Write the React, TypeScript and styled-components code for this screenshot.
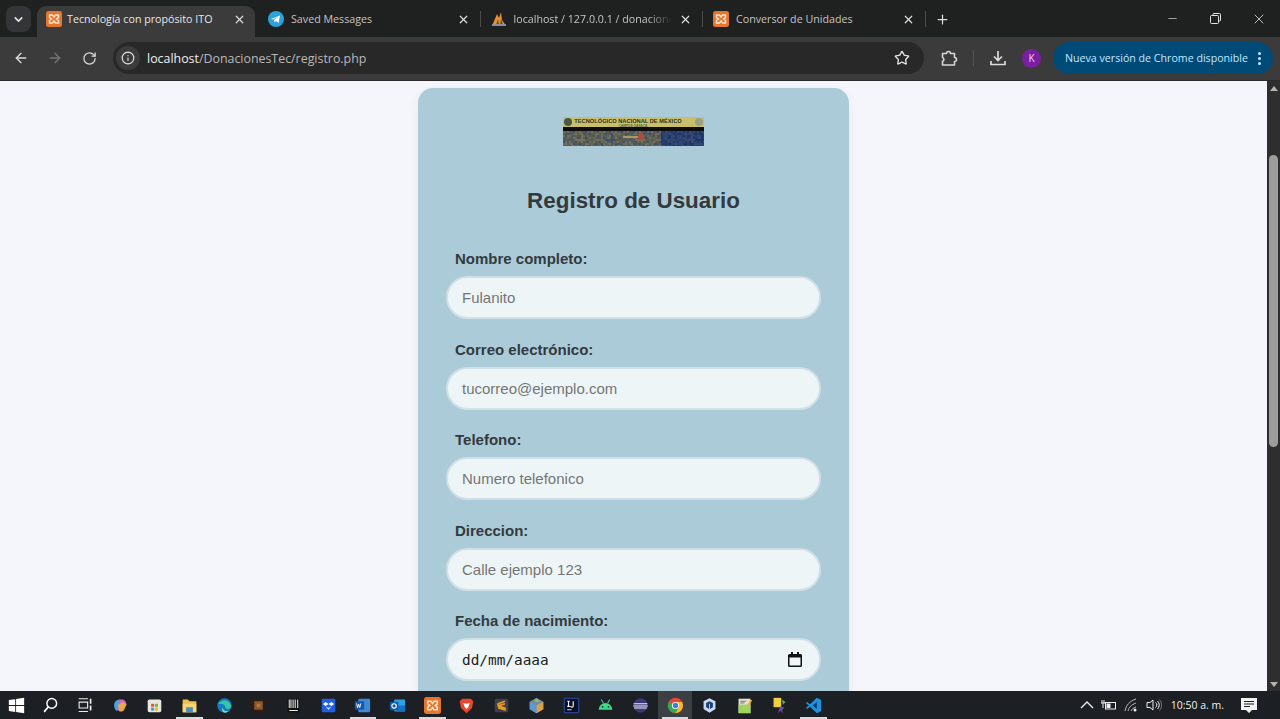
import React from 'react';
import styled, { createGlobalStyle } from 'styled-components';
import { ArrowLeft, ArrowRight, ChevronDown, Info, Minus, Plus, RotateCw, Star, X } from 'lucide-react';

const GlobalStyle = createGlobalStyle`
  html, body {
    margin: 0;
    padding: 0;
    height: 100%;
    overflow: hidden;
    background: #f4f6fb;
  }
  * { box-sizing: border-box; }
`;

const Xampp = ({ size = 16 }: { size?: number }) => (
  <svg width={size} height={size} viewBox="0 0 16 16">
    <rect width="16" height="16" rx="2.5" fill="#e5762e" />
    <path d="M3.5 4h3l1.500 2 1.500-2h3v2.500L10.500 8l2 1.500V12h-3L8 10l-1.500 2h-3V9.500l2-1.500-2-1.500z" fill="none" stroke="#fbe3cf" strokeWidth="1.5" />
  </svg>
);

const Telegram = () => (
  <svg width="16" height="16" viewBox="0 0 16 16">
    <circle cx="8" cy="8" r="8" fill="#2aa3dd" />
    <path d="M3 8l9-3.600-1.400 7.600-2.700-2-1.400 1.400-.3-2.500 4-3.300-5 3z" fill="#fff" />
  </svg>
);

const PhpMyAdmin = () => (
  <svg width="16" height="16" viewBox="0 0 16 16">
    <path d="M1 15L6 3l2 4 2-6 1 8 4 6z" fill="#e8912d" />
    <path d="M5 14l2-6 1 6zM9 14l1-6 2 6z" fill="#5b4a36" />
    <rect x="1" y="13" width="14" height="2" fill="#8a8f99" />
  </svg>
);

const Puzzle = () => (
  <svg width="18" height="18" viewBox="0 0 18 18" fill="none" stroke="#d6d6d6" strokeWidth="1.6" strokeLinejoin="round">
    <path d="M2.500 4.500h4a2 2 0 0 1 4 0h4v4a2 2 0 0 1 0 4v3.500h-12v-3.700a2 2 0 0 0 0-3.800z" />
  </svg>
);

const Download = () => (
  <svg width="18" height="18" viewBox="0 0 18 18" fill="none" stroke="#dcdcdc" strokeWidth="1.7">
    <path d="M9 2v9M5 7.500L9 11.500l4-4M2 12v3.500h14V12" />
  </svg>
);

const Restore = () => (
  <svg width="11" height="11" viewBox="0 0 11 11" fill="none" stroke="#e2e2e2" strokeWidth="1">
    <rect x="0.5" y="2.5" width="8" height="8" rx="1" />
    <path d="M3 2.500V1.500a1 1 0 0 1 1-1h5.500a1 1 0 0 1 1 1V7a1 1 0 0 1-1 1H8.500" />
  </svg>
);

const Calendar = () => (
  <svg width="14" height="15" viewBox="0 0 14 15">
    <path d="M3 0h2v2h4V0h2v2h1.500A1.500 1.500 0 0 1 14 3.500v10a1.500 1.500 0 0 1-1.500 1.500h-11A1.500 1.500 0 0 1 0 13.500v-10A1.500 1.500 0 0 1 1.500 2H3zM1.500 5.500v8h11v-8z" fill="#111" />
  </svg>
);

// mosaic colours of the banner photo: warm on the left, blue on the right
const warmTones = ['#6d6a58', '#57604f', '#7a7058', '#4d5a66', '#5f5a4c', '#3f4f68'];
const blueTones = ['#24396a', '#2c4474', '#1f3566', '#3a4a72', '#29406e', '#33456a'];
const mosaic = Array.from({ length: 71 * 8 }, (_, i) => {
  const col = i % 71;
  const row = Math.floor(i / 71);
  const tones = col > 48 ? blueTones : warmTones;
  return { col, row, fill: tones[(col * 7 + row * 13 + (col * row) % 5) % tones.length] };
});

const Logo = () => (
  <svg width="141" height="29" viewBox="0 0 141 29">
    <defs>
      <filter id="soft"><feGaussianBlur stdDeviation="0.4" /></filter>
    </defs>
    <rect width="141" height="10" fill="#c9bf6a" />
    <rect y="10" width="141" height="4" fill="#0d0d0f" />
    <g filter="url(#soft)">
      {mosaic.map(t => (
        <rect key={`${t.col}-${t.row}`} x={t.col * 2} y={14 + t.row * 2} width="2" height="2" fill={t.fill} />
      ))}
    </g>
    <rect x="60" y="19" width="16" height="2" fill="#a8986a" />
    <circle cx="78" cy="20" r="3" fill="#b8483a" />
    <circle cx="5" cy="5" r="4" fill="#4a5a40" />
    <circle cx="136" cy="5" r="4" fill="#9aa086" />
    <text x="65" y="5.500" textAnchor="middle" fontFamily="Liberation Sans, sans-serif" fontWeight="700" fontSize="5.700" fill="#2a3524">TECNOLÓGICO NACIONAL DE MÉXICO</text>
    <text x="70" y="9.500" textAnchor="middle" fontFamily="Liberation Sans, sans-serif" fontWeight="700" fontSize="3.200" fill="#5a6240">CAMPUS OAXACA</text>
  </svg>
);

const Tile = ({ children }: { children: React.ReactNode }) => (
  <svg width="20" height="20" viewBox="0 0 20 20">{children}</svg>
);

const taskIcons: { id: string; active?: boolean; current?: boolean; icon: React.ReactNode }[] = [
  { id: 'windows', icon: <Tile><path d="M1 3.500l7.500-1v7H1zM9.500 2.300L19 1v8.500H9.500zM1 10.500h7.500v7l-7.500-1zM9.500 10.500H19V19l-9.500-1.300z" fill="#fff" /></Tile> },
  { id: 'search', icon: <Tile><circle cx="11.500" cy="7.500" r="5.700" fill="none" stroke="#fff" strokeWidth="1.700" /><path d="M7.500 11.500L2.500 17.500" stroke="#fff" strokeWidth="2" /></Tile> },
  { id: 'taskview', icon: <Tile><path d="M2 2h11M2 17h11M2.500 6h10v7h-10z" fill="none" stroke="#ececec" strokeWidth="1.300" /><path d="M15 2h2v6h-2zM15 10h2v6h-2z" fill="#ececec" /></Tile> },
  { id: 'copilot', icon: <Tile><path d="M3 13C1 7 5 2 10 3l3 3-5 9c-2 2-4 1-5-2z" fill="#4f9fe0" /><path d="M10 3c4-1 7 2 7 6l-5 7c-2 2-4 1-5-1z" fill="#d867b5" /><path d="M7 9l6-3 4 3-3 7c-2 2-5 1-6-1z" fill="#f2b13f" opacity=".85" /></Tile> },
  { id: 'store', icon: <Tile><rect x="2" y="3" width="16" height="15" rx="2" fill="#e8e6df" /><path d="M6 8h3.500v3.500H6z" fill="#e2543c" /><path d="M10.500 8H14v3.500h-3.500z" fill="#6eb43f" /><path d="M6 12.500h3.500V16H6z" fill="#3c9ae0" /><path d="M10.500 12.500H14V16h-3.500z" fill="#f2b90f" /></Tile> },
  { id: 'folder', active: true, icon: <Tile><path d="M2 3h6l2 2h8v13H2z" fill="#f0c04a" /><path d="M2 8h16v10H2z" fill="#f7d774" /><path d="M6 12h8v6H6z" fill="#4b8ec4" /></Tile> },
  { id: 'edge', icon: <Tile><circle cx="10" cy="10" r="8.500" fill="#1679c4" /><path d="M2 9c2-6 14-8 16 2 0 2-2 3-4 3-2 0-3-1-3-2 0-4-8-5-9-3z" fill="#38c6a3" /><path d="M8 12c0 4 4 6 8 4-2 2-5 3-7 2-2-1-2-4-1-6z" fill="#7fe0a5" /></Tile> },
  { id: 'minecraft', icon: <Tile><rect x="2" y="2" width="16" height="16" fill="#2b1d12" /><rect x="5" y="5" width="10" height="10" fill="#8a5a2f" /><rect x="8" y="8" width="4" height="4" fill="#b37840" /></Tile> },
  { id: 'barcode', icon: <Tile><rect x="3" y="2" width="14" height="16" fill="#111" /><path d="M5 3v10M7 3v10M9.500 3v10M12 3v10M15 3v10M5 16h10" stroke="#eee" strokeWidth="1.200" /></Tile> },
  { id: 'dropbox', icon: <Tile><rect x="2" y="2" width="16" height="16" rx="1.500" fill="#1f5fe0" /><path d="M6.500 6L10 8.200 6.500 10.500 3.500 8.200zM13.500 6l3 2.200-3 2.300L10 8.200zM6.500 11L10 13l3.500-2 -3.500 4z" fill="#fff" /></Tile> },
  { id: 'word', active: true, icon: <Tile><rect x="5" y="2" width="14" height="16" rx="1.500" fill="#3f8ad6" /><rect x="1" y="5" width="11" height="10" rx="1" fill="#1b57a8" /><path d="M3 7.500l1.200 5 1.300-4 1.300 4 1.200-5" fill="none" stroke="#fff" strokeWidth="1" /></Tile> },
  { id: 'outlook', icon: <Tile><rect x="6" y="3" width="13" height="14" rx="1" fill="#2fa3e0" /><path d="M9 10h10v7H9z" fill="#1a6fc0" /><rect x="1" y="5.500" width="10" height="10" rx="1" fill="#0f5ba8" /><circle cx="6" cy="10.500" r="2.600" fill="none" stroke="#fff" strokeWidth="1.300" /></Tile> },
  { id: 'xampp', active: true, icon: <Xampp size={20} /> },
  { id: 'brave', icon: <Tile><path d="M5 2h10l3 3-1.500 8L10 19l-6.500-6L2 5z" fill="#e8472b" /><path d="M6 7l4 1 4-1-2 5-2 2-2-2z" fill="#fff" /></Tile> },
  { id: 'sublime', icon: <Tile><rect x="2" y="2" width="16" height="16" rx="2" fill="#3e4047" /><path d="M14 5L6 8v2.500l8 2.500V15l-8-2.500M6 10.500L14 8" fill="none" stroke="#f09a26" strokeWidth="2" /></Tile> },
  { id: 'box', icon: <Tile><path d="M10 1l8 4.500v9L10 19l-8-4.500v-9z" fill="#7b8aa0" /><path d="M10 10l8-4.500v9L10 19z" fill="#d9a24a" /><path d="M10 10L2 5.500v9L10 19z" fill="#5e9ad0" /><path d="M7 4l3-2 4 2.500-3 2z" fill="#7fc06a" /></Tile> },
  { id: 'intellij', icon: <Tile><rect x="1.500" y="1.500" width="17" height="17" rx="1" fill="#0a0f24" stroke="#2e5fc0" strokeWidth="1" /><path d="M5 5h3M6.500 5v6M5 11h3M12 5v5.500a1.500 1.500 0 0 1-3 0" fill="none" stroke="#fff" strokeWidth="1.300" /><path d="M5 15h5" stroke="#fff" strokeWidth="1" /></Tile> },
  { id: 'android', icon: <Tile><path d="M2 15a8 8 0 0 1 16 0z" fill="#3ddc84" /><path d="M5 3l2.500 4M15 3l-2.500 4" stroke="#3ddc84" strokeWidth="1.200" /><circle cx="6.500" cy="11.500" r="1" fill="#123" /><circle cx="13.500" cy="11.500" r="1" fill="#123" /></Tile> },
  { id: 'eclipse', icon: <Tile><circle cx="10" cy="10" r="8.500" fill="#3b3a78" /><path d="M2 8h16M1.500 10.500h17M2.500 13h15" stroke="#f0edf7" strokeWidth="1.200" /></Tile> },
  { id: 'chrome', active: true, current: true, icon: <Tile><circle cx="10" cy="10" r="9" fill="#e0483c" /><path d="M10 10L2.200 5.500A9 9 0 0 0 10 19l4-6z" fill="#34a853" /><path d="M10 6h7.800A9 9 0 0 1 10 19l4-7z" fill="#f5bd20" /><circle cx="10" cy="10" r="4.200" fill="#fff" /><circle cx="10" cy="10" r="3.200" fill="#3b7de0" /></Tile> },
  { id: 'vbox', icon: <Tile><path d="M10 1.500l7 3.500v9l-7 4.500L3 14V5z" fill="#c8dcf0" /><path d="M10 5l4 2v5l-4 2.500L6 12V7z" fill="#1c3f78" /><path d="M10 8v6.500" stroke="#c8dcf0" /></Tile> },
  { id: 'notes', icon: <Tile><rect x="3" y="2" width="14" height="17" fill="#e5e3d0" /><path d="M3 9h14v10H3z" fill="#9fd45e" /><path d="M5 5h7M5 7h5" stroke="#666" /><path d="M12 11l5-8 2 1-5 8z" fill="#e8b23c" /></Tile> },
  { id: 'sticky', icon: <Tile><path d="M3 1h9v11H3z" fill="#f0d040" /><path d="M11 11l5 2-3 2 1 4-3-3-3 3z" fill="#6f4fb0" /><path d="M13 3l4 3-3 3z" fill="#5fae6c" /></Tile> },
  { id: 'vscode', active: true, icon: <Tile><path d="M14 1l5 2.500v13L14 19 6 11.500 2.500 14 1 13l3.500-3L1 7l1.500-1L6 8.500z" fill="#1f93e0" /><path d="M14 6v8l-5-4z" fill="#0b3f70" /></Tile> },
];

const fields = [
  { label: 'Nombre completo:', placeholder: 'Fulanito', type: 'text' },
  { label: 'Correo electrónico:', placeholder: 'tucorreo@ejemplo.com', type: 'email' },
  { label: 'Telefono:', placeholder: 'Numero telefonico', type: 'tel' },
  { label: 'Direccion:', placeholder: 'Calle ejemplo 123', type: 'text' },
];

const App = () => {
  return (
    <Screen>
      <GlobalStyle />
      <TabStrip>
        <TabSearch><ChevronDown size={13} strokeWidth={3} /></TabSearch>
        <ActiveTab>
          <Xampp />
          <TabTitle $active>Tecnología con propósito ITO</TabTitle>
          <TabClose><X size={13} strokeWidth={2.2} /></TabClose>
        </ActiveTab>
        <Tab>
          <Telegram />
          <TabTitle>Saved Messages</TabTitle>
          <TabClose><X size={13} strokeWidth={2.2} /></TabClose>
        </Tab>
        <TabSep />
        <Tab>
          <PhpMyAdmin />
          <TabTitle $fade>localhost / 127.0.0.1 / donaciones</TabTitle>
          <TabClose><X size={13} strokeWidth={2.2} /></TabClose>
        </Tab>
        <TabSep />
        <Tab>
          <Xampp />
          <TabTitle>Conversor de Unidades</TabTitle>
          <TabClose><X size={13} strokeWidth={2.2} /></TabClose>
        </Tab>
        <TabSep />
        <NewTab><Plus size={15} strokeWidth={2} /></NewTab>
        <WindowControls>
          <WindowButton><Minus size={13} strokeWidth={1.2} /></WindowButton>
          <WindowButton><Restore /></WindowButton>
          <WindowButton><X size={16} strokeWidth={1.2} /></WindowButton>
        </WindowControls>
      </TabStrip>

      <Toolbar>
        <NavButton><ArrowLeft size={16} strokeWidth={2} /></NavButton>
        <NavButton $off><ArrowRight size={16} strokeWidth={2} /></NavButton>
        <NavButton><RotateCw size={15} strokeWidth={2} /></NavButton>
        <Omnibox>
          <SiteInfo><Info size={14} strokeWidth={2} /></SiteInfo>
          <Url><strong>localhost</strong>/DonacionesTec/registro.php</Url>
          <Star size={16} strokeWidth={2} color="#e3e3e3" />
        </Omnibox>
        <ToolIcon $left={16}><Puzzle /></ToolIcon>
        <ToolSep />
        <ToolIcon $left={15}><Download /></ToolIcon>
        <Avatar>K</Avatar>
        <UpdateChip>
          <span>Nueva versión de Chrome disponible</span>
          <Dots><i /><i /><i /></Dots>
        </UpdateChip>
      </Toolbar>

      <Viewport>
        <Page>
          <Card>
            <LogoRow><Logo /></LogoRow>
            <Title>Registro de Usuario</Title>
            <Form>
              {fields.map(field => (
                <Field key={field.label}>
                  <Label>{field.label}</Label>
                  <Input type={field.type} placeholder={field.placeholder} />
                </Field>
              ))}
              <Field>
                <Label>Fecha de nacimiento:</Label>
                <DateBox>
                  <DateText>dd/mm/aaaa</DateText>
                  <Calendar />
                </DateBox>
              </Field>
            </Form>
          </Card>
        </Page>
        <Scrollbar>
          <ScrollArrow><Triangle /></ScrollArrow>
          <Thumb />
          <ScrollArrow $down><Triangle $down /></ScrollArrow>
        </Scrollbar>
      </Viewport>

      <Taskbar>
        <TaskIcons>
          {taskIcons.map(item => (
            <TaskItem key={item.id} $active={item.active} $current={item.current}>{item.icon}</TaskItem>
          ))}
        </TaskIcons>
        <Tray>
          <TrayIcon $width={22}>
            <svg width="14" height="8" viewBox="0 0 14 8" fill="none" stroke="#eee" strokeWidth="1.400"><path d="M1 7l6-6 6 6" /></svg>
          </TrayIcon>
          <TrayIcon $width={22}>
            <svg width="16" height="13" viewBox="0 0 16 13" fill="none" stroke="#eee" strokeWidth="1"><rect x="4.500" y="3.500" width="10" height="6.500" /><path d="M1 1v3M3 1v3M0 4h4M2 4v5" /><rect x="6" y="5" width="3" height="3.500" fill="#eee" /></svg>
          </TrayIcon>
          <TrayIcon $width={24}>
            <svg width="16" height="14" viewBox="0 0 16 14" fill="none" stroke="#bbb" strokeWidth="1"><path d="M1 13C2 7 6 3 12 1M4 13c1-4 3-6 8-8M7 13c1-2 2-3 5-4" /><circle cx="11" cy="12" r="1.500" fill="#eee" stroke="none" /></svg>
          </TrayIcon>
          <TrayIcon $width={20}>
            <svg width="16" height="14" viewBox="0 0 16 14" fill="none" stroke="#eee" strokeWidth="1"><path d="M1 4.500h3L7 2v10L4 9.500H1z" /><path d="M9.500 4.500a3 3 0 0 1 0 5M11.500 3a5.500 5.500 0 0 1 0 8" /><path d="M13.500 1.500a8 8 0 0 1 0 11" stroke="#777" /></svg>
          </TrayIcon>
          <Clock>10:50 a. m.</Clock>
          <Notify>
            <svg width="16" height="15" viewBox="0 0 16 15"><path d="M0 0h16v12h-5l-3 3-3-3H0z" fill="#f2f2f2" /><path d="M3 3.500h10M3 6h10M3 8.500h6" stroke="#1c1f24" strokeWidth="1" /></svg>
          </Notify>
        </Tray>
      </Taskbar>
    </Screen>
  );
};

const Screen = styled.div`
  display: flex;
  flex-direction: column;
  width: 1280px;
  height: 719px;
  overflow: hidden;
  font-family: 'Liberation Sans', Arial, sans-serif;
`;

const TabStrip = styled.div`
  display: flex;
  align-items: flex-end;
  flex: none;
  height: 37px;
  padding-left: 6px;
  background: #1f2020;
  font-family: 'Open Sans', sans-serif;
`;

const TabSearch = styled.div`
  display: flex;
  align-items: center;
  justify-content: center;
  width: 25px;
  height: 26px;
  margin: 0 6px 5px 0;
  border-radius: 8px;
  background: #343536;
  color: #e3e3e3;
`;

const Tab = styled.div`
  display: flex;
  align-items: center;
  gap: 7px;
  flex: none;
  width: 221.5px;
  height: 31px;
  padding: 0 10px 5px 10px;
  color: #c7c7c7;
`;

const ActiveTab = styled(Tab)`
  gap: 5px;
  width: 218px;
  padding: 0 9px 5px 9px;
  margin-right: 3px;
  border-radius: 9px 9px 0 0;
  background: #3b3b3b;
  color: #e3e3e3;
`;

const TabTitle = styled.span<{ $active?: boolean; $fade?: boolean }>`
  flex: 1;
  overflow: hidden;
  white-space: nowrap;
  font-size: 10.7px;
  color: ${p => (p.$active ? '#e6e6e6' : '#c4c4c4')};
  ${p => p.$fade && 'mask-image: linear-gradient(90deg, #000 85%, transparent);'}
`;

const TabClose = styled.span`
  display: flex;
  color: #dedede;
`;

const TabSep = styled.div`
  flex: none;
  width: 1px;
  height: 16px;
  margin: 0 0 10px 0;
  background: #4b4b4b;
`;

const NewTab = styled.div`
  display: flex;
  align-items: center;
  justify-content: center;
  width: 33px;
  height: 26px;
  margin-bottom: 5px;
  color: #dcdcdc;
`;

const WindowControls = styled.div`
  display: flex;
  margin-left: auto;
  align-self: stretch;
`;

const WindowButton = styled.div`
  display: flex;
  align-items: center;
  justify-content: center;
  width: 43px;
  height: 37px;
  color: #e6e6e6;
`;

const Toolbar = styled.div`
  display: flex;
  align-items: center;
  flex: none;
  height: 44px;
  padding: 0 5px 1px 4px;
  border-bottom: 1px solid #2a2a2a;
  background: #3b3b3b;
`;

const NavButton = styled.div<{ $off?: boolean }>`
  display: flex;
  align-items: center;
  justify-content: center;
  width: 34px;
  height: 30px;
  color: ${p => (p.$off ? '#777' : '#dcdcdc')};
`;

const Omnibox = styled.div`
  display: flex;
  align-items: center;
  width: 811px;
  height: 32px;
  margin-left: 7px;
  padding: 0 14px 0 3px;
  border-radius: 16px;
  background: #282828;
`;

const SiteInfo = styled.div`
  display: flex;
  align-items: center;
  justify-content: center;
  width: 24px;
  height: 24px;
  border-radius: 50%;
  background: #3c3c3c;
  color: #e3e3e3;
`;

const Url = styled.div`
  flex: 1;
  margin: 1px 0 0 7px;
  font-family: 'Open Sans', sans-serif;
  font-size: 12.4px;
  color: #b9b9b9;

  strong {
    font-weight: 400;
    color: #f0f0f0;
  }
`;

const ToolIcon = styled.div<{ $left: number }>`
  display: flex;
  margin-left: ${p => p.$left}px;
`;

const ToolSep = styled.div`
  width: 1px;
  height: 16px;
  margin-left: 15px;
  background: #565656;
`;

const Avatar = styled.div`
  display: flex;
  align-items: center;
  justify-content: center;
  width: 19px;
  height: 19px;
  margin-left: 15px;
  border-radius: 50%;
  background: #7b1fa2;
  font-family: 'Open Sans', sans-serif;
  font-size: 10px;
  color: #e9d6f0;
`;

const UpdateChip = styled.div`
  display: flex;
  align-items: center;
  justify-content: space-between;
  width: 220px;
  height: 32px;
  margin-left: 12px;
  padding: 0 12px;
  border-radius: 16px;
  background: #004a77;
  font-family: 'Open Sans', sans-serif;
  font-size: 10.65px;
  white-space: nowrap;
  color: #c2e7ff;
`;

const Dots = styled.div`
  display: flex;
  flex-direction: column;
  gap: 2px;

  i {
    display: block;
    width: 3px;
    height: 3px;
    border-radius: 50%;
    background: #c2e7ff;
  }
`;

const Viewport = styled.div`
  display: flex;
  flex: 1;
  min-height: 0;
`;

const Page = styled.div`
  display: flex;
  justify-content: center;
  flex: 1;
  overflow: hidden;
  padding-top: 7px;
  background: #f4f6fb;
`;

const Card = styled.div`
  flex: none;
  width: 431px;
  height: 700px;
  padding: 29px 28px 0;
  border-radius: 15px;
  background: #abcbd9;
  box-shadow: 0 4px 12px rgba(0, 0, 0, 0.06);
`;

const LogoRow = styled.div`
  display: flex;
  justify-content: center;
  height: 29px;
`;

const Title = styled.h2`
  margin: 41px 0 35px;
  font-size: 22.4px;
  line-height: 28px;
  font-weight: 700;
  text-align: center;
  color: #333a3d;
`;

const Form = styled.div`
  display: flex;
  flex-direction: column;
  gap: 21.6px;
`;

const Field = styled.div`
  display: flex;
  flex-direction: column;
  gap: 8px;
`;

const Label = styled.label`
  padding-left: 9px;
  font-size: 15px;
  line-height: 18px;
  font-weight: 700;
  color: #333a3d;
`;

const Input = styled.input`
  width: 375px;
  height: 43px;
  padding: 0 14px;
  border: 2px solid #d0e0e6;
  border-radius: 22px;
  outline: none;
  background: #eef5f7;
  font-family: 'Liberation Sans', Arial, sans-serif;
  font-size: 15px;
  color: #2d3436;

  &::placeholder {
    color: #757575;
    opacity: 1;
  }
`;

const DateBox = styled.div`
  display: flex;
  align-items: center;
  justify-content: space-between;
  width: 375px;
  height: 43px;
  padding: 0 17px 0 14px;
  border: 2px solid #d0e0e6;
  border-radius: 22px;
  background: #eef5f7;
`;

const DateText = styled.span`
  font-family: 'DejaVu Sans Mono', monospace;
  font-size: 14.4px;
  color: #1c1c1c;
`;

const Scrollbar = styled.div`
  display: flex;
  flex-direction: column;
  align-items: center;
  flex: none;
  width: 13px;
  background: #2e2e2e;
`;

const ScrollArrow = styled.div<{ $down?: boolean }>`
  display: flex;
  align-items: center;
  justify-content: center;
  flex: none;
  height: 14px;
  margin-top: ${p => (p.$down ? 'auto' : '0')};
`;

const Triangle = styled.span<{ $down?: boolean }>`
  width: 0;
  height: 0;
  border-left: 4.5px solid transparent;
  border-right: 4.5px solid transparent;
  ${p => (p.$down ? 'border-top: 5px solid #b5b5b5;' : 'border-bottom: 5px solid #b5b5b5;')}
`;

const Thumb = styled.div`
  flex: none;
  width: 9px;
  height: 292px;
  margin-top: 60px;
  border-radius: 5px;
  background: #9d9d9d;
`;

const Taskbar = styled.div`
  display: flex;
  align-items: stretch;
  justify-content: space-between;
  flex: none;
  height: 28px;
  background: #1c1f24;
`;

const TaskIcons = styled.div`
  display: flex;
`;

const TaskItem = styled.div<{ $active?: boolean; $current?: boolean }>`
  position: relative;
  display: flex;
  align-items: center;
  justify-content: center;
  width: 34.7px;
  background: ${p => (p.$current ? '#3c3f44' : 'transparent')};

  &:first-child {
    width: 33.35px;
  }

  svg {
    width: 17px;
    height: 17px;
  }

  ${p =>
    p.$active &&
    `&::after {
      content: '';
      position: absolute;
      left: 4px;
      right: 4px;
      bottom: 0;
      height: 2px;
      background: #d8dade;
    }`}
`;

const Tray = styled.div`
  display: flex;
  align-items: center;
  padding-right: 10px;
`;

const TrayIcon = styled.div<{ $width: number }>`
  display: flex;
  align-items: center;
  justify-content: center;
  width: ${p => p.$width}px;
`;

const Clock = styled.div`
  margin-left: 7px;
  font-family: 'Open Sans', sans-serif;
  font-size: 10.5px;
  color: #f0f0f0;
  white-space: nowrap;
`;

const Notify = styled.div`
  display: flex;
  margin-left: 17px;
  margin-right: 13px;
`;

export default App;
